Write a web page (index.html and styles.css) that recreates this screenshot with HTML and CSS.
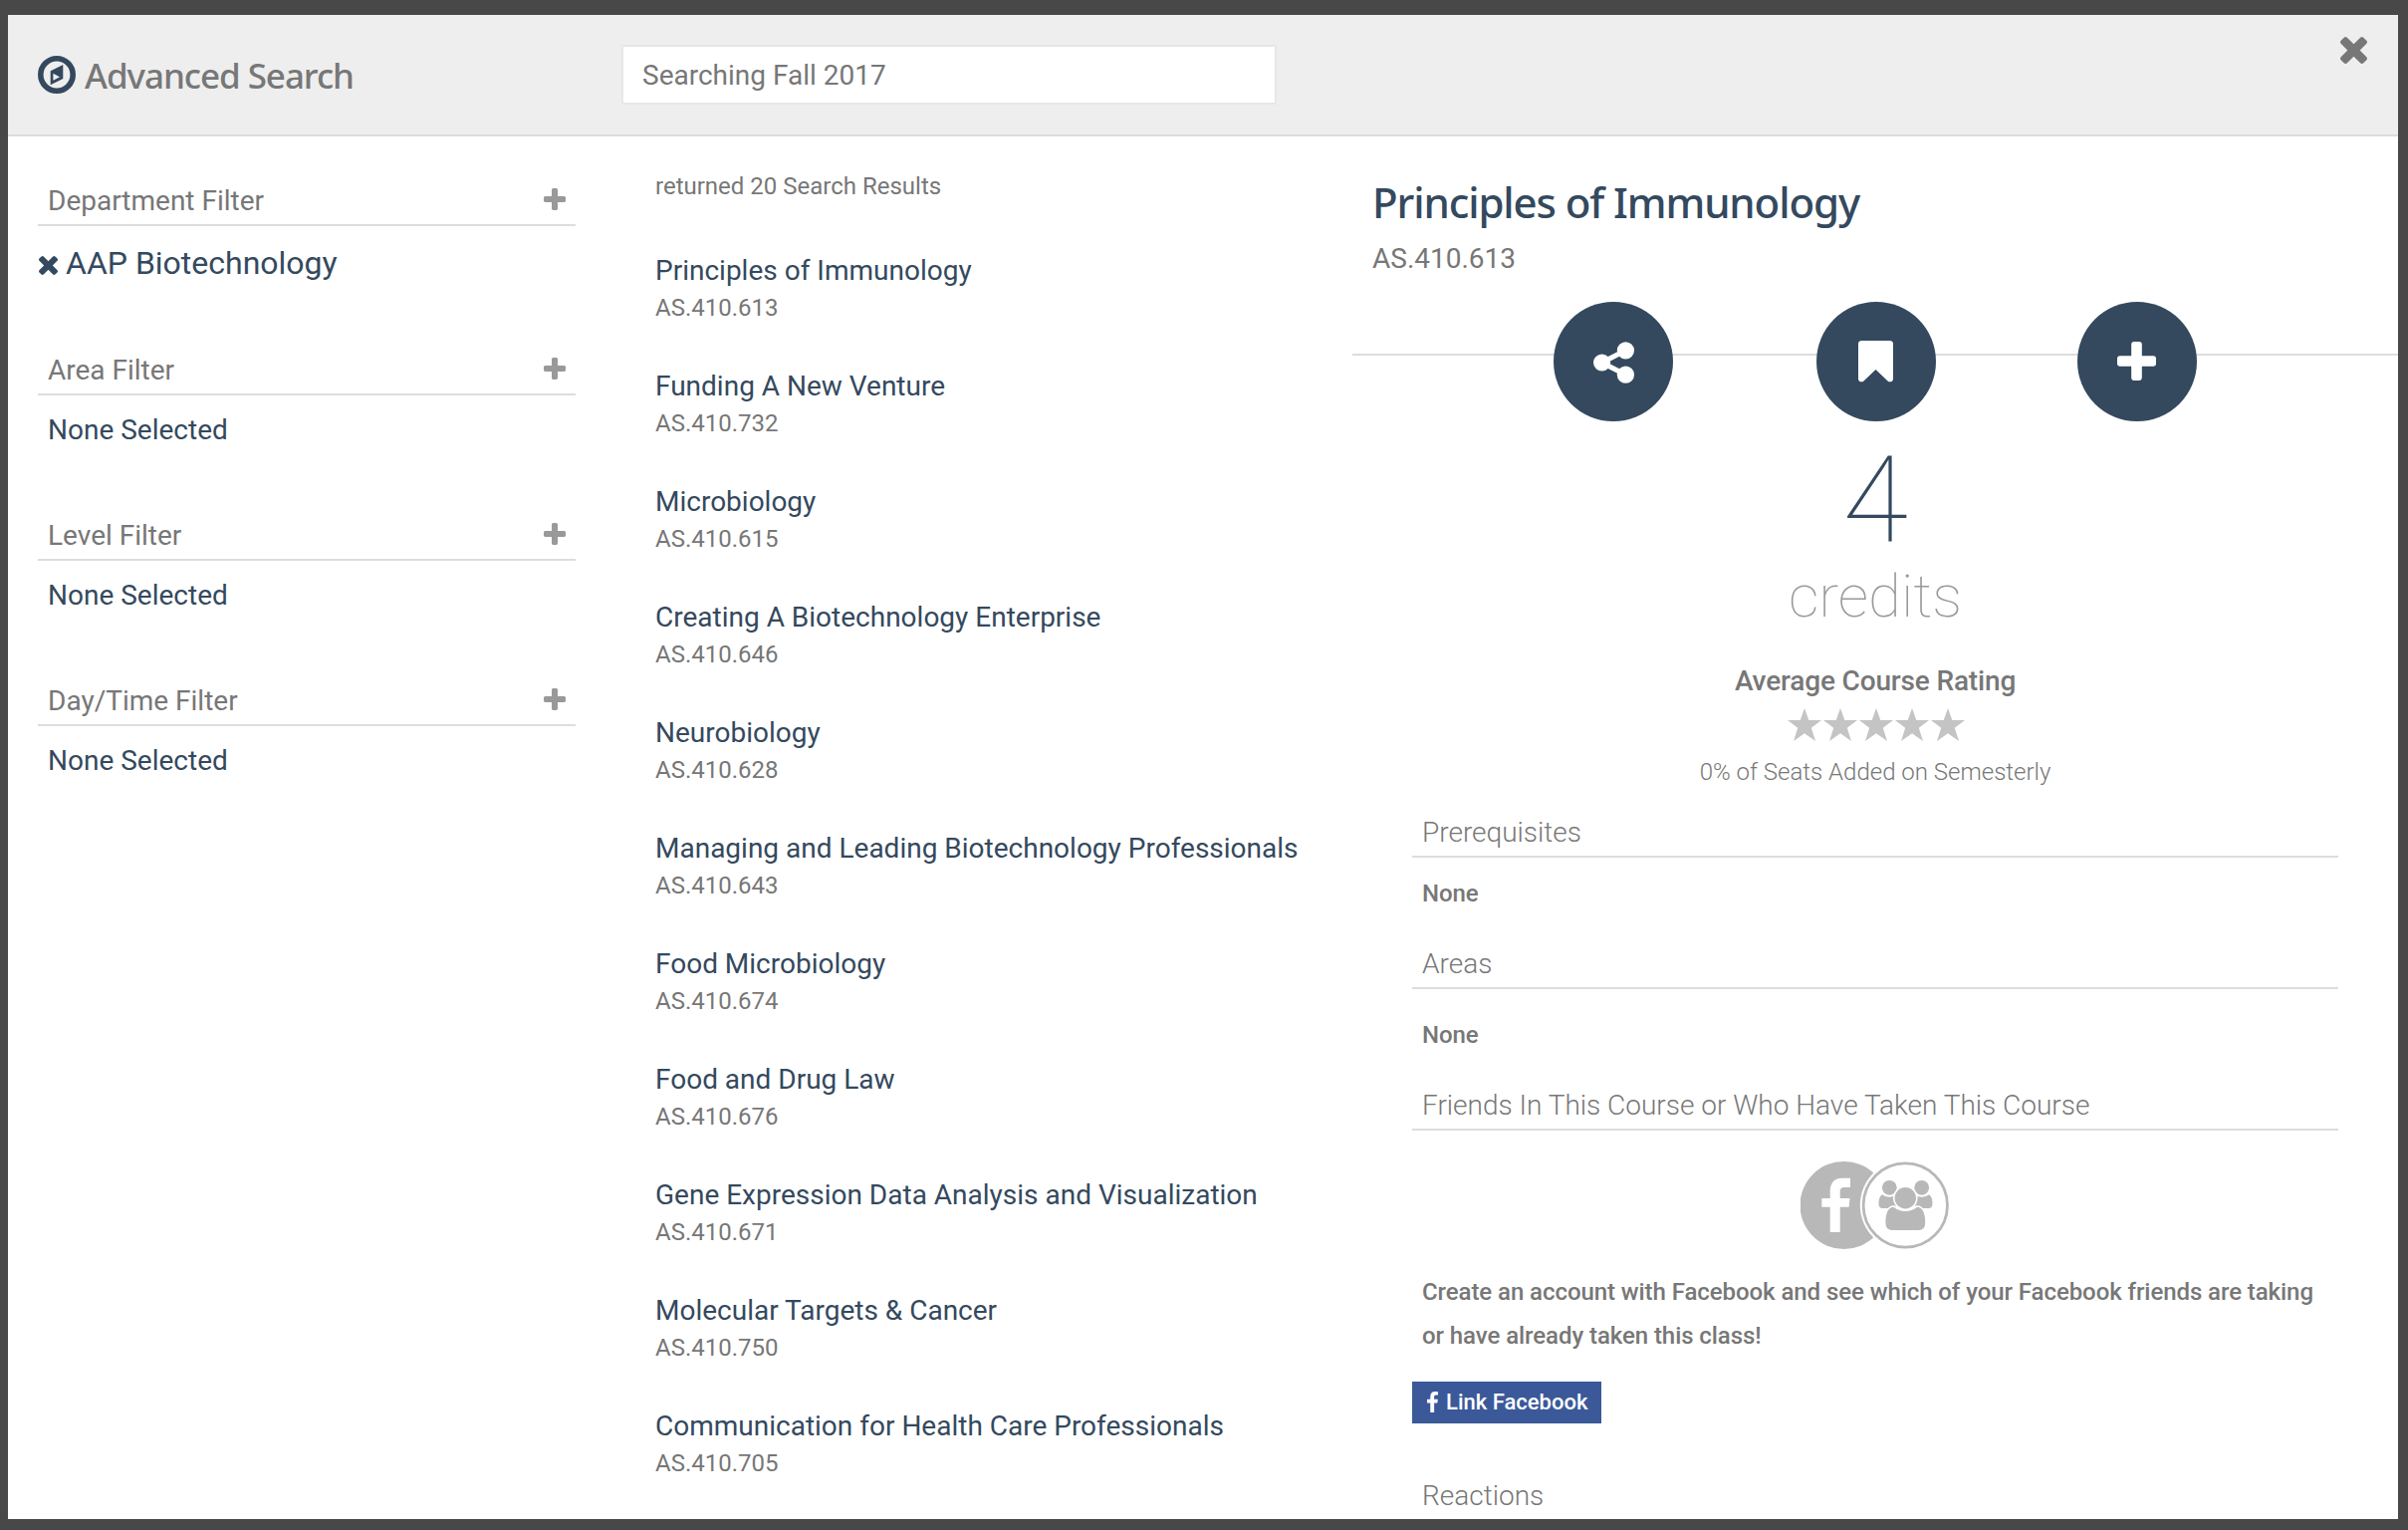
FILE: index.html
```
<!DOCTYPE html>
<html lang="en">
<head>
<meta charset="utf-8">
<title>Advanced Search</title>
<link rel="stylesheet" href="styles.css">
</head>
<body>
<svg class="defs" aria-hidden="true">
  <symbol id="plus" viewBox="192 128 1408 1408"><path d="M1600 736v192q0 40-28 68t-68 28h-416v416q0 40-28 68t-68 28h-192q-40 0-68-28t-28-68v-416h-416q-40 0-68-28t-28-68v-192q0-40 28-68t68-28h416v-416q0-40 28-68t68-28h192q40 0 68 28t28 68v416h416q40 0 68 28t28 68z"/></symbol>
  <symbol id="times" viewBox="302 366 1188 1188"><path d="M1490 1322q0 40-28 68l-136 136q-28 28-68 28t-68-28l-294-294-294 294q-28 28-68 28t-68-28l-136-136q-28-28-28-68t28-68l294-294-294-294q-28-28-28-68t28-68l136-136q28-28 68-28t68 28l294 294 294-294q28-28 68-28t68 28l136 136q28 28 28 68t-28 68l-294 294 294 294q28 28 28 68z"/></symbol>
  <symbol id="star" viewBox="0 0 34 33"><path d="M17 0l4.300 12H34L23.800 19.700 28 33 17 25.200 6 33l4.200-13.300L0 12h12.700z"/></symbol>
</svg>
<div class="modal">
  <header class="topbar">
    <div class="brand">
      <svg class="compass" viewBox="0 0 38 38"><circle cx="19" cy="19" r="16.200" fill="none" stroke="#34495e" stroke-width="5.600"/><path fill="#34495e" fill-rule="evenodd" d="M25.300 9v14L12.700 29.300v-14zM15.400 17.800v7l6.600-3.500z"/></svg>
      <h1 class="brand-name">Advanced Search</h1>
    </div>
    <div class="search-box">Searching Fall 2017</div>
    <svg class="close"><use href="#times"/></svg>
  </header>
  <main class="columns">
    <aside class="filters">
      <section class="filter">
        <h2 class="filter-head">Department Filter<svg class="add"><use href="#plus"/></svg></h2>
        <div class="filter-chosen"><svg class="remove"><use href="#times"/></svg>AAP Biotechnology</div>
      </section>
      <section class="filter">
        <h2 class="filter-head">Area Filter<svg class="add"><use href="#plus"/></svg></h2>
        <div class="filter-none">None Selected</div>
      </section>
      <section class="filter">
        <h2 class="filter-head">Level Filter<svg class="add"><use href="#plus"/></svg></h2>
        <div class="filter-none">None Selected</div>
      </section>
      <section class="filter">
        <h2 class="filter-head">Day/Time Filter<svg class="add"><use href="#plus"/></svg></h2>
        <div class="filter-none">None Selected</div>
      </section>
    </aside>
    <section class="results">
      <p class="count">returned 20 Search Results</p>
      <ul class="result-list">
        <li><h3 class="result-name">Principles of Immunology</h3><p class="result-code">AS.410.613</p></li>
        <li><h3 class="result-name">Funding A New Venture</h3><p class="result-code">AS.410.732</p></li>
        <li><h3 class="result-name">Microbiology</h3><p class="result-code">AS.410.615</p></li>
        <li><h3 class="result-name">Creating A Biotechnology Enterprise</h3><p class="result-code">AS.410.646</p></li>
        <li><h3 class="result-name">Neurobiology</h3><p class="result-code">AS.410.628</p></li>
        <li><h3 class="result-name">Managing and Leading Biotechnology Professionals</h3><p class="result-code">AS.410.643</p></li>
        <li><h3 class="result-name">Food Microbiology</h3><p class="result-code">AS.410.674</p></li>
        <li><h3 class="result-name">Food and Drug Law</h3><p class="result-code">AS.410.676</p></li>
        <li><h3 class="result-name">Gene Expression Data Analysis and Visualization</h3><p class="result-code">AS.410.671</p></li>
        <li><h3 class="result-name">Molecular Targets &amp; Cancer</h3><p class="result-code">AS.410.750</p></li>
        <li><h3 class="result-name">Communication for Health Care Professionals</h3><p class="result-code">AS.410.705</p></li>
      </ul>
    </section>
    <article class="course">
      <h2 class="course-name">Principles of Immunology</h2>
      <p class="course-code">AS.410.613</p>
      <div class="actions">
        <button class="action"><svg class="share" viewBox="0 0 41 42"><g fill="#fff"><circle cx="8.600" cy="21" r="8.600"/><circle cx="32.400" cy="8.800" r="8.600"/><circle cx="32.400" cy="33.200" r="8.600"/></g><path d="M32.400 8.800L8.600 21l23.800 12.200" fill="none" stroke="#fff" stroke-width="5"/></svg></button>
        <button class="action"><svg class="bookmark" viewBox="256 128 1280 1536"><path d="M1420 128q23 0 44 9 33 13 52.500 41t19.500 62v1289q0 34-19.500 62t-52.500 41q-19 8-44 8-48 0-83-32l-441-424-441 424q-36 33-83 33-23 0-44-9-33-13-52.500-41t-19.500-62v-1289q0-34 19.500-62t52.500-41q21-9 44-9h1048z"/></svg></button>
        <button class="action"><svg class="big-plus"><use href="#plus"/></svg></button>
      </div>
      <p class="credit-count">4</p>
      <p class="credit-label">credits</p>
      <p class="rating-label">Average Course Rating</p>
      <div class="stars"><svg><use href="#star"/></svg><svg><use href="#star"/></svg><svg><use href="#star"/></svg><svg><use href="#star"/></svg><svg><use href="#star"/></svg></div>
      <p class="seats">0% of Seats Added on Semesterly</p>
      <div class="modules">
        <h3 class="module-head">Prerequisites</h3>
        <p class="module-text prereq">None</p>
        <h3 class="module-head">Areas</h3>
        <p class="module-text areas">None</p>
        <h3 class="module-head">Friends In This Course or Who Have Taken This Course</h3>
        <svg class="friends" viewBox="0 0 149 88">
          <circle cx="43.500" cy="44" r="44" fill="#b8b8b8"/>
          <path fill="#fff" d="M29.700 71V45.700h-8.400V37h8.400v-7c0-9 4.600-13.300 12.300-13.300h8V26h-5.500c-3.800 0-4.800 1.600-4.800 4.800V37h9.800l-.9 8.700h-8.900V71z"/>
          <circle cx="105.300" cy="44" r="45.500" fill="#fff"/>
          <circle cx="105.300" cy="44" r="42.200" fill="none" stroke="#b8b8b8" stroke-width="2.800"/>
          <g fill="#b8b8b8">
            <circle cx="89.300" cy="26.300" r="7.400"/><circle cx="121.700" cy="26.300" r="7.400"/>
            <path d="M82 33.300c4 3 9 3.200 14 .7V47H83c-3.500 0-4.500-2-4.500-5 0-4 1-7 3.500-8.700zM129 33.300c-4 3-9 3.200-14 .7V47h13c3.500 0 4.500-2 4.500-5 0-4-1-7-3.500-8.700z"/>
          </g>
          <g fill="#b8b8b8" stroke="#fff" stroke-width="1.600">
            <path d="M94 45c7 5.500 15.600 5.500 22.600 0 6.400-.2 9.400 6.500 9.400 16.500 0 5.500-2.500 8.300-7.500 8.300h-26.400c-5 0-7.500-2.800-7.500-8.300 0-10 3-16.700 9.400-16.500z"/>
            <circle cx="105.300" cy="36.700" r="11.500"/>
          </g>
        </svg>
        <p class="module-text pitch">Create an account with Facebook and see which of your Facebook friends are taking or have already taken this class!</p>
        <button class="fb-button"><svg class="fb" viewBox="479 0 864 1664"><path d="M1343 12v264h-157q-86 0-116 36t-30 108v189h293l-39 296h-254v759h-306v-759h-255v-296h255v-218q0-186 104-288.500t277-102.500q147 0 228 12z"/></svg>Link Facebook</button>
        <h3 class="module-head">Reactions</h3>
      </div>
    </article>
  </main>
</div>
</body>
</html>
```
FILE: styles.css
```
* { box-sizing: border-box; margin: 0; padding: 0; }

body {
  height: 1536px;
  padding: 15px 10px 11px 8px;
  background: #484848;
  color: #777;
  font-family: Roboto, sans-serif;
  font-size: 28px;
  font-weight: 400;
  overflow: hidden;
}

h1, h2, h3 { font-size: inherit; font-weight: inherit; }
ul { list-style: none; }
svg { display: block; flex: none; fill: currentColor; }
button { border: 0; font: inherit; }
.defs { display: none; }

.modal { height: 1510px; background: #fff; overflow: hidden; }

/* Top bar */
.topbar {
  display: flex;
  align-items: center;
  height: 122px;
  padding: 0 31px 0 30px;
  background: #eee;
  border-bottom: 2px solid #dcdcdc;
}
.brand { display: flex; align-items: center; gap: 9px; width: 586px; }
.compass { width: 38px; height: 38px; }
.brand-name { font-family: "Noto Sans", sans-serif; font-size: 35px; font-weight: 500; letter-spacing: -1.05px; }
.search-box {
  width: 658px;
  height: 60px;
  padding-left: 19px;
  border: 2px solid #e7e7e7;
  background: #fff;
  line-height: 57px;
}
.close { width: 27px; height: 27px; margin: 22px 0 0 auto; align-self: flex-start; }

/* Columns */
.columns { display: flex; height: 1388px; }
.filters { width: 570px; padding: 40px 0 0 30px; }
.results { width: 780px; padding: 35px 0 0 80px; }
.course { width: 1050px; padding-top: 36px; text-align: center; }

/* Filters */
.filter { margin-bottom: 60px; }
.filter-head {
  display: flex;
  align-items: center;
  justify-content: space-between;
  height: 50px;
  padding: 0 10px;
  border-bottom: 2px solid #ddd;
}
.add { width: 22px; height: 22px; margin-top: -2px; color: #999; }
.filter-chosen {
  display: flex;
  align-items: center;
  gap: 8px;
  padding: 14px 0 0 1px;
  color: #34495e;
  font-size: 32px;
  line-height: 46px;
}
.remove { width: 19px; height: 19px; margin-top: 4px; }
.filter-none { padding: 13px 0 0 10px; color: #34495e; line-height: 43px; }

/* Results */
.count { margin-bottom: 51px; font-size: 24px; line-height: 30px; }
.result-list { display: flex; flex-direction: column; gap: 41px; }
.result-name { color: #34495e; line-height: 38px; }
.result-code { font-size: 24px; line-height: 37px; }

/* Course details */
.course-name {
  padding-left: 20px;
  color: #34495e;
  font-family: "Noto Sans", sans-serif;
  font-size: 42px;
  font-weight: 500;
  letter-spacing: -1.1px;
  line-height: 60px;
  text-align: left;
}
.course-code { padding: 1px 0 0 20px; line-height: 52px; text-align: left; }
.actions {
  display: flex;
  justify-content: center;
  gap: 143px;
  height: 120px;
  margin: 17px 0 19px;
  background: linear-gradient(#ddd, #ddd) 0 52px / 100% 2px no-repeat;
}
.action {
  display: flex;
  align-items: center;
  justify-content: center;
  width: 120px;
  height: 120px;
  border-radius: 50%;
  background: #34495e;
  color: #fff;
}
.action:nth-child(2) { margin: 0 -1px 0 1px; }
.share { width: 41px; height: 42px; margin-top: 2px; }
.bookmark { width: 35px; height: 42px; margin-right: 2px; }
.big-plus { width: 39px; height: 39px; margin: -2px 1px 0 0; }
.credit-count { color: #34495e; font-size: 120px; font-weight: 100; line-height: 120px; }
.credit-label { color: #999; font-size: 60px; font-weight: 100; line-height: 73px; }
.rating-label { margin-top: 29px; font-weight: 500; letter-spacing: -0.16px; line-height: 40px; }
.stars { display: flex; justify-content: center; gap: 2px; height: 56px; padding: 7px 0 0 2px; color: #c4c4c4; }
.stars svg { width: 34px; height: 33px; }
.seats { font-size: 24px; font-weight: 300; line-height: 30px; }

.modules { margin: 21px 60px 0; text-align: left; }
.module-head { height: 50px; padding-left: 10px; border-bottom: 2px solid #ddd; font-weight: 300; line-height: 49px; }
.module-text { padding: 0 10px; font-size: 24px; font-weight: 500; letter-spacing: -0.07px; line-height: 44px; }
.prereq { margin: 14px 0 24px; }
.areas { margin: 24px 0; }
.friends { width: 149px; height: 88px; margin: 31px 0 21px 390px; }
.pitch { margin-bottom: 24px; }
.fb-button {
  display: flex;
  align-items: center;
  gap: 8px;
  width: 190px;
  height: 42px;
  margin-bottom: 48px;
  padding: 0 0 2px 15px;
  background: #3b5998;
  color: #fff;
  font-size: 22px;
  font-weight: 500;
}
.fb { width: 11px; height: 21px; }
```
